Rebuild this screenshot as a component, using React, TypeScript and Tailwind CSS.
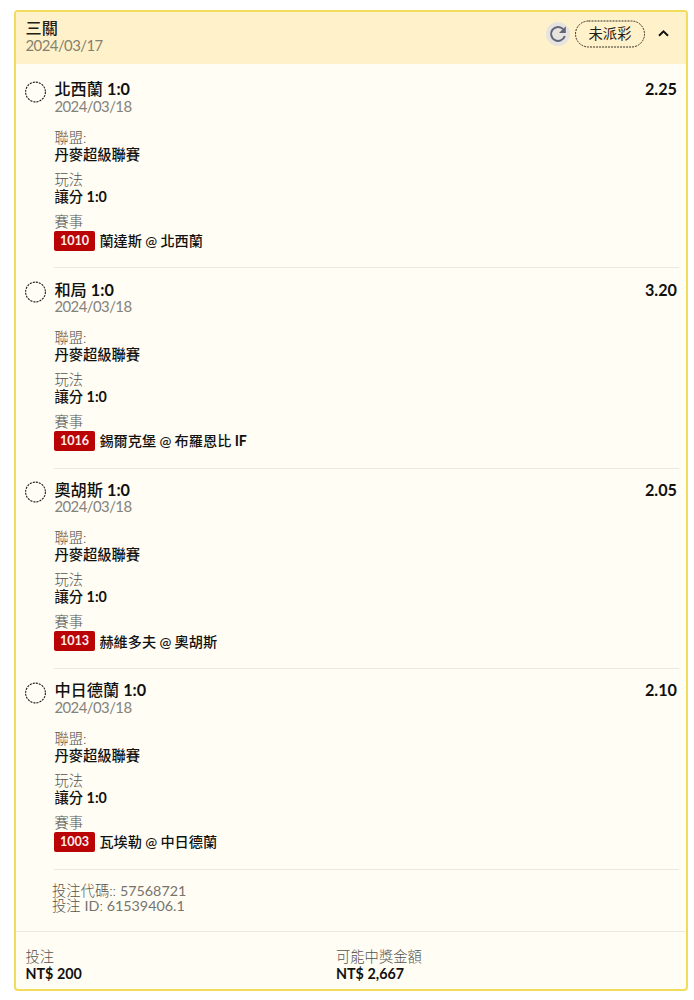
type Leg = { pick: string; odds: string; code: string; match: string };

const legs: Leg[] = [
  { pick: '北西蘭 1:0', odds: '2.25', code: '1010', match: '蘭達斯 @ 北西蘭' },
  { pick: '和局 1:0', odds: '3.20', code: '1016', match: '錫爾克堡 @ 布羅恩比 IF' },
  { pick: '奧胡斯 1:0', odds: '2.05', code: '1013', match: '赫維多夫 @ 奧胡斯' },
  { pick: '中日德蘭 1:0', odds: '2.10', code: '1003', match: '瓦埃勒 @ 中日德蘭' },
];

/** Sets Latin letters and digits heavier than the Chinese text around them. */
function Strong({ text }: { text: string }) {
  return (
    <span className="font-medium text-[#111]">
      {text.split(/([A-Za-z0-9$:.,]+)/).map((part, i) =>
        i % 2 ? <span key={i} className="font-bold">{part}</span> : part,
      )}
    </span>
  );
}

/** Light Chinese text with regular-weight Latin letters and digits. */
function Muted({ text }: { text: string }) {
  return (
    <span className="font-light text-[#55534e]">
      {text.split(/([A-Za-z0-9][A-Za-z0-9.]*)/).map((part, i) =>
        i % 2 ? <span key={i} className="font-normal text-[#77746e]">{part}</span> : part,
      )}
    </span>
  );
}

function Field({ label, value }: { label: string; value: string }) {
  return (
    <div className="mb-[9px]">
      <div className="h-4 leading-4"><Muted text={label} /></div>
      <div className="h-[17px] leading-[17px]"><Strong text={value} /></div>
    </div>
  );
}

function DottedRing() {
  return (
    <svg className="mt-[12.5px] h-[22px] w-[22px] shrink-0" viewBox="0 0 22 22" fill="none">
      <circle cx="10.5" cy="11" r="9.9" stroke="#1a1a1a" strokeWidth="1.1" strokeDasharray="2.1 1.01" />
    </svg>
  );
}

function LegRow({ leg }: { leg: Leg }) {
  return (
    <section className="flex h-[200.4px] pl-[8.5px] pr-[7px]">
      <DottedRing />
      <div className="ml-[7.5px] flex-1 border-b border-[#ebe8e1] pt-[11.2px]">
        <div className="flex h-[19.4px] justify-between pl-[0.4px] pr-[2px] text-[16.2px] leading-[19px]">
          <Strong text={leg.pick} />
          <Strong text={leg.odds} />
        </div>
        <div className="h-[15px] pl-[0.4px] text-[14.9px] leading-[15px] tracking-[-0.54px] text-[#85827c]">2024/03/18</div>
        <div className="pt-[16px] pl-[0.4px]">
          <Field label="聯盟:" value="丹麥超級聯賽" />
          <Field label="玩法" value="讓分 1:0" />
          <div className="h-4 leading-4"><Muted text="賽事" /></div>
          <div className="flex h-[22px] items-center">
            <span className="-ml-[0.4px] flex h-[20px] w-[41px] items-center justify-center rounded-[2px] bg-[#b90304] pt-px text-[12.6px] font-bold text-[#ffefea]">{leg.code}</span>
            <span className="ml-[4.4px] text-[14.2px] [word-spacing:-0.3px]"><Strong text={leg.match} /></span>
          </div>
        </div>
      </div>
    </section>
  );
}

export default function App() {
  return (
    <main className="h-[1000px] w-[694px] overflow-hidden bg-white pt-[10px] pl-[14px] font-['Lato','Noto_Sans_CJK_TC',sans-serif] text-[14.3px] whitespace-nowrap">
      <article className="flex h-[981px] w-[674px] flex-col overflow-hidden rounded-[4px] border-2 border-[#f2dc5c] bg-[#fffdf4]">
        <header className="flex h-[52px] shrink-0 items-start justify-between bg-[#fff2cb] pl-[9.5px]">
          <div className="pt-[7.4px]">
            <div className="h-[18px] text-[16.2px] leading-[18px] font-medium text-[#222016]">三關</div>
            <div className="h-4 text-[14.9px] leading-4 tracking-[-0.54px] text-[#85806e]">2024/03/17</div>
          </div>
          <div className="flex items-center pt-[7.5px] pr-[16px]">
            <span className="mr-[5px] flex h-6 w-6 items-center justify-center rounded-full bg-[#e7e4df]">
              <svg className="h-[18px] w-[18px]" viewBox="0 0 18 18" fill="none">
                <path d="M14.2 4.1A7 7 0 1 0 15.8 11" stroke="#616577" strokeWidth="2" />
                <path d="M16.8 1.2V8H10Z" fill="#616577" />
              </svg>
            </span>
            <span className="relative flex h-[28px] w-[70px] items-center justify-center text-[#222016]">
              <svg className="absolute inset-0 h-[28px] w-[70px]" viewBox="0 0 70 28" fill="none">
                <rect x="0.5" y="1" width="69" height="26" rx="13" stroke="#353020" strokeDasharray="2 1" />
              </svg>
              未派彩
            </span>
            <svg className="ml-[12px] h-3 w-[13px]" viewBox="0 0 13 12" fill="none">
              <path d="m2 7.7 4.5-4.4L11 7.7" stroke="#111" strokeWidth="2" />
            </svg>
          </div>
        </header>
        <div className="pt-1">
          {legs.map((leg) => <LegRow key={leg.code} leg={leg} />)}
        </div>
        <div className="h-[62px] shrink-0 border-b border-[#ebe8e1] pt-[13px] pl-[36px] leading-[15px]">
          <div><Muted text="投注代碼:: 57568721" /></div>
          <div><Muted text="投注 ID: 61539406.1" /></div>
        </div>
        <footer className="flex pt-[17.4px] pl-[9.5px]">
          <div className="w-[310.5px]">
            <Field label="投注" value="NT$ 200" />
          </div>
          <Field label="可能中獎金額" value="NT$ 2,667" />
        </footer>
      </article>
    </main>
  );
}
